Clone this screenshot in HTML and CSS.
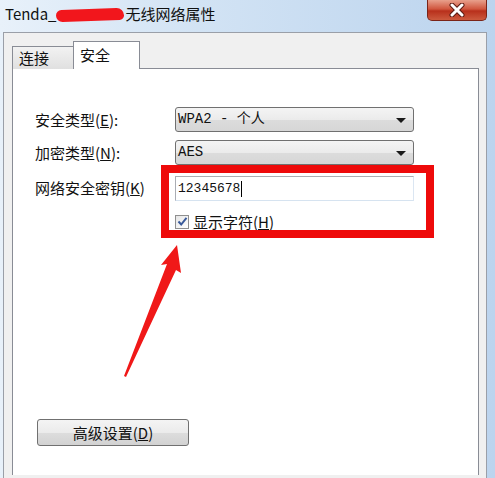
FILE: index.html
```html
<!DOCTYPE html>
<html>
<head>
    <title>Tenda 无线网络属性</title>
    <link rel="stylesheet" href="styles.css">
</head>
<body>
    <div class="window">
        <div class="titlebar">
            <div class="title">Tenda_<span class="scribble"></span>无线网络属性</div>
            <div class="close">
                <svg width="18" height="14" viewBox="0 0 18 14">
                    <path d="M4 2 L14 12 M14 2 L4 12" stroke="#5a1a12" stroke-width="5" stroke-linecap="round"/>
                    <path d="M4 2 L14 12 M14 2 L4 12" stroke="#ffffff" stroke-width="3" stroke-linecap="round"/>
                </svg>
            </div>
        </div>
        <div class="frame">
            <div class="tabs">
                <div class="tab">连接</div>
                <div class="tab active">安全</div>
            </div>
            <div class="panel">
                <div class="form">
                    <label>安全类型(<u>E</u>):</label>
                    <div class="combo">WPA2 - 个人<span class="arrow"></span></div>

                    <label>加密类型(<u>N</u>):</label>
                    <div class="combo">AES<span class="arrow"></span></div>

                    <label>网络安全密钥(<u>K</u>)</label>
                    <div class="textbox">12345678<span class="caret"></span></div>

                    <span></span>
                    <div class="check-row">
                        <span class="checkbox">
                            <svg width="11" height="11" viewBox="0 0 11 11">
                                <path d="M1.5 5.5 L4.2 8.5 L9.5 1.8" fill="none" stroke="#3a5a9a" stroke-width="2"/>
                            </svg>
                        </span>
                        <span>显示字符(<u>H</u>)</span>
                    </div>
                </div>

                <button class="advanced">高级设置(<u>D</u>)</button>

                <div class="highlight"></div>
                <svg class="pointer" width="80" height="140" viewBox="0 0 80 140">
                    <polygon points="56,2 60,30 55,27 5,134 3,133 46,21 40,22" fill="#f01818"/>
                </svg>
            </div>
        </div>
    </div>
</body>
</html>
```

FILE: styles.css
```css
* {
    margin: 0;
    padding: 0;
    box-sizing: border-box;
}

body {
    width: 495px;
    height: 478px;
    overflow: hidden;
    font-family: "Noto Sans CJK SC", "DejaVu Sans", sans-serif;
    background: #ffffff;
}

.window {
    width: 495px;
    height: 478px;
    background: linear-gradient(90deg, #e8f1fa 0%, #d2e3f4 40%, #bcd4ee 100%);
    display: flex;
    flex-direction: column;
}

.titlebar {
    height: 32px;
    display: flex;
    justify-content: space-between;
    align-items: flex-start;
    padding-left: 5px;
    padding-right: 8px;
}

.title {
    font-size: 15px;
    line-height: 15px;
    margin-top: 6px;
    color: #111111;
    display: flex;
    align-items: center;
}

.scribble {
    display: inline-block;
    width: 68px;
    height: 12px;
    margin: 2px 1px 0 0;
    background: #f2161c;
    border-radius: 6px 8px 5px 7px;
    transform: rotate(-2deg);
}

.close {
    width: 60px;
    height: 21px;
    background: linear-gradient(#e8a08c 0%, #d0563e 45%, #b8301c 55%, #cc5a3e 100%);
    border: 1px solid #7a2418;
    border-top: none;
    border-radius: 0 0 5px 5px;
    display: flex;
    align-items: center;
    justify-content: center;
}

.frame {
    flex: 1;
    margin: 0 8px 0 3px;
    background: #f0f0f0;
    border: 1px solid #9a9fa8;
    border-bottom: none;
    padding: 8px 7px 0 8px;
    display: flex;
    flex-direction: column;
}

.tabs {
    display: flex;
    align-items: flex-end;
    height: 28px;
    margin-bottom: -1px;
    position: relative;
    z-index: 1;
}

.tab {
    height: 23px;
    padding: 0 6px;
    width: 62px;
    font-size: 15px;
    line-height: 21px;
    border: 1px solid #898c95;
    border-bottom: none;
    background: linear-gradient(#f2f2f2, #e0e0e0);
    color: #111111;
}

.tab.active {
    height: 28px;
    width: 67px;
    background: #ffffff;
    margin-left: -1px;
    line-height: 26px;
}

.panel {
    flex: 1;
    background: #ffffff;
    border: 1px solid #898c95;
    border-bottom: none;
    margin-bottom: 3px;
    position: relative;
    padding: 38px 0 0 22px;
}

.form {
    display: grid;
    grid-template-columns: 140px 239px;
    row-gap: 8px;
    align-items: center;
    font-size: 15px;
    color: #111111;
}

.combo {
    height: 25px;
    border: 1px solid #707070;
    border-radius: 3px;
    background: linear-gradient(#f4f4f4 0%, #ebebeb 50%, #dcdcdc 51%, #d6d6d6 100%);
    font-family: "Liberation Mono", "Noto Sans CJK SC", monospace;
    font-size: 14px;
    line-height: 23px;
    padding-left: 2px;
    position: relative;
}

.arrow {
    position: absolute;
    right: 7px;
    top: 10px;
    border-left: 5px solid transparent;
    border-right: 5px solid transparent;
    border-top: 5px solid #1a1a1a;
}

.textbox {
    height: 25px;
    margin-top: 3px;
    border: 1px solid #abadb3;
    border-bottom-color: #d6e3f0;
    border-right-color: #dbe6f2;
    background: #ffffff;
    font-family: "Liberation Mono", monospace;
    font-size: 13px;
    line-height: 23px;
    padding-left: 2px;
    display: flex;
    align-items: center;
}

.caret {
    display: inline-block;
    width: 1px;
    height: 16px;
    background: #000000;
    margin-left: 1px;
}

.check-row {
    display: flex;
    align-items: center;
    gap: 4px;
    margin-top: 2px;
    font-size: 15px;
}

.checkbox {
    width: 14px;
    height: 14px;
    border: 1px solid #8f8f8f;
    background: linear-gradient(135deg, #e6e6e6, #ffffff);
    display: flex;
    align-items: center;
    justify-content: center;
}

.advanced {
    position: absolute;
    left: 24px;
    top: 350px;
    width: 152px;
    height: 27px;
    border: 1px solid #707070;
    border-radius: 3px;
    background: linear-gradient(#f4f4f4 0%, #ebebeb 50%, #dddddd 51%, #d2d2d2 100%);
    font-family: "Noto Sans CJK SC", sans-serif;
    font-size: 15px;
    color: #111111;
}

.highlight {
    position: absolute;
    left: 148px;
    top: 96px;
    width: 273px;
    height: 73px;
    border: 8px solid #ee0a0a;
}

.pointer {
    position: absolute;
    left: 108px;
    top: 174px;
}
```
